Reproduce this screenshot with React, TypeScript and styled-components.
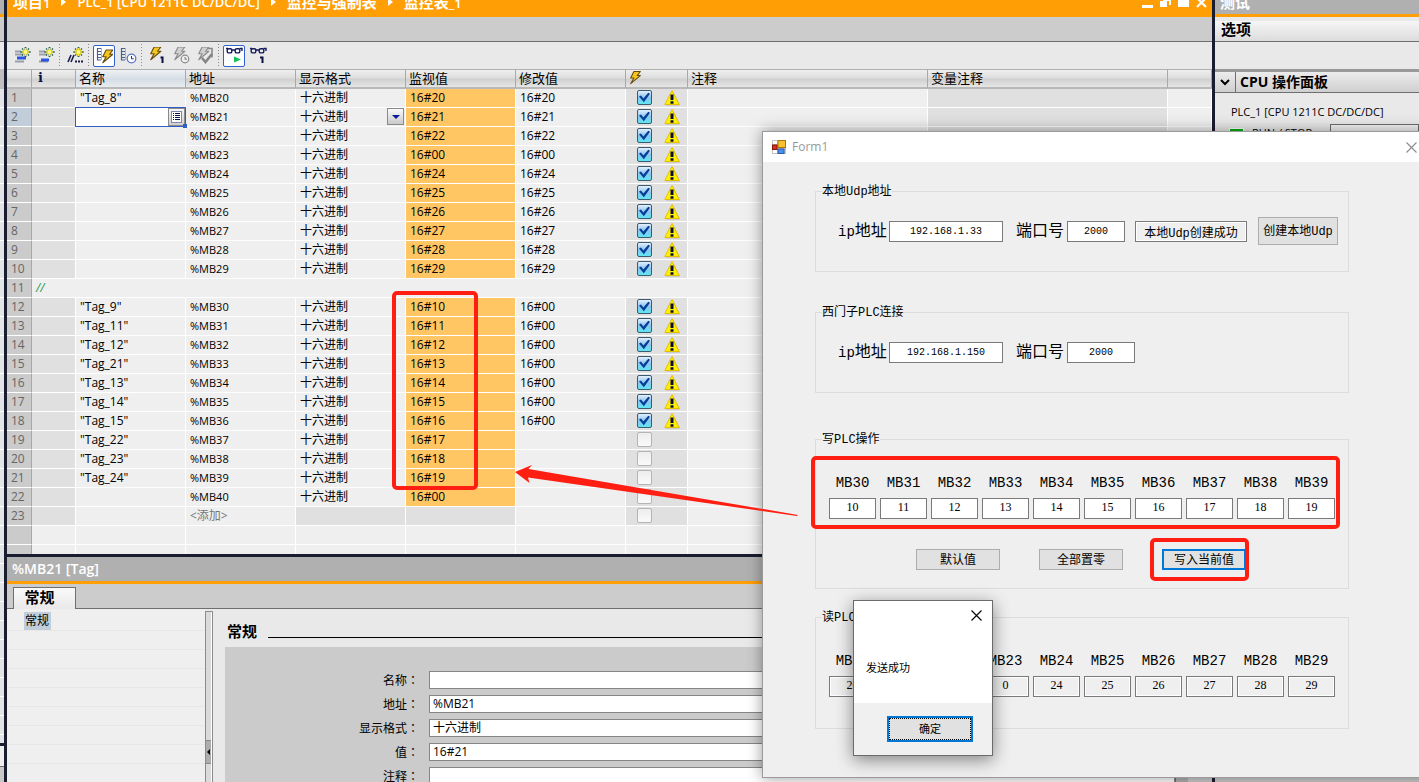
import React from "react";
import styled, { createGlobalStyle, css } from "styled-components";

const uiFont = `"Open Sans", "Noto Sans CJK SC", sans-serif`;
const formFont = `"Liberation Mono", "Noto Sans CJK SC", monospace`;
const orange = "#ff9e05";
const navy = "#1a1d2f";
const headGradient = "linear-gradient(#efefef 0%, #dedede 45%, #d0d0d0 55%, #e6e6e6 100%)";

const GlobalStyle = createGlobalStyle`
  *, *::before, *::after { box-sizing: border-box; }
  html, body { margin: 0; height: 100%; overflow: hidden; }
  #root { height: 100%; }
  button, input, select, textarea { font: inherit; color: inherit; margin: 0; padding: 0; border-radius: 0; outline: none; }
`;

/* ---------- shell ---------- */

const Desktop = styled.div`
  position: relative;
  display: flex;
  height: 100vh;
  overflow: hidden;
  background: #e9e9e9;
  font-family: ${uiFont};
  font-size: 12px;
  line-height: 18px;
  color: #000;
`;

const Divider = styled.div<{ $horizontal?: boolean }>`
  flex: none;
  background: ${navy};
  ${(p) => (p.$horizontal ? "height: 3px;" : "width: 3px;")}
`;

const Main = styled.main`
  flex: 1;
  min-width: 0;
  display: flex;
  flex-direction: column;
`;

const CaptionStrip = styled.div`
  flex: none;
  height: 17px;
  background: #b0b0b0;
  border-bottom: 3px solid ${orange};
`;

const GreyStrip = styled.div`
  flex: none;
  height: 25px;
  background: #cccccc;
  border-bottom: 1px solid #6f6f6f;
`;

/* ---------- collapsed project tree on the left edge ---------- */

const TreeEdge = styled.aside`
  flex: none;
  width: 4px;
  display: flex;
  flex-direction: column;
  background: #cccccc;
`;

const EdgeTools = styled.div`
  height: 27px;
  background: #e9e9e9;
`;

const EdgeHead = styled.div`
  height: 20px;
  background: #bfbfbf;
`;

const EdgeRows = styled.div`
  flex: 1;
  background: repeating-linear-gradient(#e2e4e8 0 18px, #ffffff 18px 19px);
`;

const EdgeFoot = styled.div`
  height: 39px;
  border-top: 3px solid ${navy};
  background: linear-gradient(#efefef 0 20px, #6f6f6f 20px 21px, #c8c8c8 21px);
`;

/* ---------- editor title ---------- */

const EditorTitle = styled.header`
  flex: none;
  display: flex;
  align-items: flex-end;
  height: 17px;
  padding: 0 5px 5px 6px;
  background: ${orange};
  color: #fff;
  overflow: hidden;
`;

const Crumbs = styled.nav`
  display: flex;
  align-items: center;
  gap: 11px;
  height: 20px;
  font-size: 13px;
  font-weight: 600;
  line-height: 20px;
  white-space: nowrap;
`;

const CrumbCjk = styled.span`
  font-size: 15px;
  font-weight: 700;
`;

const CrumbLatin = styled.span`
  font-size: 13px;
`;

const CrumbArrow = styled.span`
  width: 0;
  border-left: 5px solid #fff;
  border-top: 4px solid transparent;
  border-bottom: 4px solid transparent;
`;

const WindowControls = styled.div`
  display: flex;
  margin-left: auto;
  gap: 7px;
`;

const WindowControl = styled.button`
  width: 11px;
  height: 12px;
  border: 0;
  background: none;
  svg { display: block; }
`;

/* ---------- toolbar ---------- */

const Toolbar = styled.div`
  flex: none;
  display: flex;
  align-items: center;
  height: 27px;
  padding-left: 4px;
  background: #e9e9e9;
`;

const ToolButton = styled.button<{ $active?: boolean }>`
  display: flex;
  align-items: center;
  justify-content: center;
  width: 22px;
  height: 22px;
  margin-right: 2px;
  border: 1px solid ${(p) => (p.$active ? "#2f63d0" : "transparent")};
  border-radius: 2px;
  background: ${(p) => (p.$active ? "#fff" : "none")};
  svg { flex: none; }
`;

const ToolSeparator = styled.span`
  width: 1px;
  height: 23px;
  margin-right: 4px;
  background: repeating-linear-gradient(#8a8a8a 0 1px, transparent 1px 3px);
`;

/* ---------- watch table ---------- */

const TableArea = styled.section`
  flex: 1;
  min-height: 0;
  overflow: hidden;
  background: #efefef;
`;

const Table = styled.table`
  width: 100%;
  table-layout: fixed;
  border-collapse: separate;
  border-spacing: 0;
`;

const HeadCell = styled.th<{ $tint?: boolean }>`
  height: 20px;
  padding: 0 0 1px 3px;
  border-top: 1px solid #b0b0b0;
  border-right: 1px solid #a8a8a8;
  border-bottom: 2px solid #b8b8b8;
  background: ${(p) => (p.$tint ? "linear-gradient(#eef1f5, #d6dde6 55%, #e8ecf1)" : headGradient)};
  font-size: 13px;
  font-weight: 400;
  line-height: 16px;
  text-align: left;
  white-space: nowrap;
  svg { display: block; }
`;

const InfoMark = styled.b`
  display: block;
  padding-left: 3px;
  font-family: "DejaVu Serif", serif;
  font-size: 13px;
  line-height: 16px;
  color: #0b1045;
`;

type Tone = "plain" | "grey" | "amber" | "number" | "numberOn";
const tones: Record<Tone, string> = {
  plain: "#efefef",
  grey: "#e0e0e0",
  amber: "#ffc663",
  number: "#cbcbcb",
  numberOn: "#c1cdd8",
};

const Cell = styled.td<{ $tone?: Tone; $small?: boolean; $flush?: boolean }>`
  position: relative;
  height: 19px;
  padding: 0 0 0 ${(p) => (p.$flush ? 0 : 4)}px;
  border-right: 1px solid #fff;
  border-bottom: 1px solid #fff;
  background: ${(p) => tones[p.$tone ?? "plain"]};
  font-size: ${(p) => (p.$small ? 11 : 12)}px;
  line-height: 18px;
  white-space: nowrap;
  ${(p) =>
    (p.$tone === "number" || p.$tone === "numberOn") &&
    css`
      border-right-color: #a8a8a8;
      color: #666;
    `}
`;

const NameEditor = styled.div`
  position: absolute;
  z-index: 1;
  inset: -1px -1px -1px -1px;
  display: flex;
  border: 1px solid #2f5fc4;
  background: #fff;
  &::after {
    content: "";
    position: absolute;
    right: -2px;
    bottom: -2px;
    width: 4px;
    height: 4px;
    background: #2f5fc4;
  }
`;

const NameInput = styled.input`
  flex: 1;
  min-width: 0;
  border: 0;
  background: none;
`;

const PickButton = styled.button`
  display: flex;
  align-items: center;
  justify-content: center;
  width: 17px;
  border: 1px solid #8a8a8a;
  background: linear-gradient(#f6f6f6, #cfcfcf);
`;

const FormatSelect = styled.select`
  display: block;
  width: 100%;
  height: 18px;
  border: 0;
  appearance: none;
  background: none;
  font-size: 12px;
`;

const DropMark = styled.span`
  position: absolute;
  top: 0;
  right: 1px;
  width: 17px;
  height: 17px;
  display: flex;
  align-items: center;
  justify-content: center;
  border: 1px solid #8a8a8a;
  background: linear-gradient(#fafafa, #c9c9c9);
  pointer-events: none;
  &::after {
    content: "";
    border-top: 4px solid #0a1a9a;
    border-left: 4px solid transparent;
    border-right: 4px solid transparent;
  }
`;

const Flags = styled.div`
  display: flex;
  align-items: center;
  gap: 12px;
  height: 18px;
  padding-left: 11px;
`;

const TickBox = styled.input`
  appearance: none;
  position: relative;
  width: 15px;
  height: 15px;
  margin-bottom: 1px;
  border: 1px solid #b4b4b4;
  border-radius: 2px;
  background: linear-gradient(#ededed, #fafafa);
  &:checked {
    border-color: #3c5a70;
    background: linear-gradient(#e4effc 0%, #8cc4ee 50%, #5fe6f4 100%);
  }
  &:checked::before {
    content: "";
    position: absolute;
    inset: 1px;
    background: #063f97;
    clip-path: polygon(0 40%, 18% 32%, 40% 58%, 84% 6%, 100% 16%, 44% 94%);
  }
`;

const Comment = styled.i`
  color: #1b9a50;
`;

const AddHint = styled.span`
  color: #777;
`;

/* ---------- inspector below the table ---------- */

const Inspector = styled.section`
  flex: none;
  display: flex;
  flex-direction: column;
  height: 225px;
  overflow: hidden;
`;

const InspectorTitle = styled.h2`
  flex: none;
  height: 27px;
  margin: 0;
  padding-left: 5px;
  border-bottom: 3px solid ${orange};
  background: #b0b0b0;
  color: #fff;
  font-size: 14px;
  font-weight: 600;
  line-height: 24px;
`;

const TabBar = styled.div`
  flex: none;
  display: flex;
  align-items: flex-end;
  height: 25px;
  padding-left: 6px;
  border-bottom: 1px solid #6f6f6f;
  background: #cccccc;
`;

const Tab = styled.button`
  width: 63px;
  height: 22px;
  margin-bottom: -1px;
  padding: 0 10px 4px 0;
  border: 1px solid #6f6f6f;
  border-bottom: 0;
  background: linear-gradient(#fafafa, #e9e9e9);
  font-size: 15px;
  font-weight: 700;
  line-height: 16px;
`;

const InspectorBody = styled.div`
  flex: 1;
  min-height: 0;
  display: flex;
  background: #e9e9e9;
`;

const Outline = styled.div`
  flex: none;
  width: 198px;
  padding-top: 3px;
  background: #efefef;
`;

const OutlineRow = styled.div`
  height: 19px;
  padding-left: 17px;
  border-bottom: 1px solid #e7e7e7;
`;

const OutlineItem = styled.a`
  display: block;
  width: 27px;
  height: 18px;
  padding-left: 1px;
  background: #c1cdd8;
  color: inherit;
  line-height: 18px;
  text-decoration: none;
`;

const Splitter = styled.div`
  flex: none;
  display: flex;
  align-items: flex-start;
  width: 8px;
  margin-top: 2px;
  padding-top: 128px;
  border: 1px solid #8a8a8a;
  border-width: 1px 1px 0 1px;
  background: linear-gradient(90deg, #dadada 0 5px, #ffffff 5px);
`;

const Grip = styled.button`
  display: flex;
  align-items: center;
  justify-content: center;
  width: 5px;
  height: 24px;
  border: solid #8a8a8a;
  border-width: 1px 0;
  background: #adadad;
  &::after {
    content: "";
    border-right: 3px solid #000;
    border-top: 3px solid transparent;
    border-bottom: 3px solid transparent;
  }
`;

const Properties = styled.div`
  flex: 1;
  min-width: 0;
  padding: 12px 0 0 12px;
`;

const PropertiesHead = styled.div`
  display: flex;
  align-items: center;
  gap: 11px;
  height: 20px;
  padding-left: 2px;
  &::after {
    content: "";
    flex: 1;
    height: 1px;
    margin-top: 12px;
    background: #000;
  }
`;

const PropertiesHeading = styled.h3`
  margin: 0;
  font-size: 15px;
  line-height: 20px;
`;

const PropertiesBox = styled.div`
  display: grid;
  grid-template-columns: 194px 1fr;
  gap: 6px 10px;
  height: 160px;
  margin-top: 6px;
  padding-top: 24px;
  align-content: start;
  background: #cbcbcb;
`;

const PropertyLabel = styled.label`
  text-align: right;
  height: 18px;
  &::after {
    content: "：";
    font-family: "Noto Sans CJK TC", sans-serif;
  }
`;

const PropertyInput = styled.input`
  width: 100%;
  height: 18px;
  padding: 0 3px;
  border: 1px solid #868686;
  background: #fff;
`;

const ScrollTrack = styled.div`
  flex: none;
  width: 37px;
  border-left: 1px solid #6f6f6f;
  background: linear-gradient(90deg, #b0b0b0 0 12px, #cccccc 12px);
`;

/* ---------- test panel on the right ---------- */

const TestPanel = styled.aside`
  flex: none;
  width: 204px;
  display: flex;
  flex-direction: column;
  background: #e9e9e9;
`;

const TestCaption = styled.div`
  flex: none;
  display: flex;
  align-items: flex-end;
  height: 17px;
  padding: 0 0 2px 5px;
  border-bottom: 3px solid ${orange};
  background: #b0b0b0;
  color: #fff;
  font-size: 15px;
  font-weight: 700;
  line-height: 20px;
  overflow: hidden;
`;

const OptionsHead = styled.div`
  flex: none;
  height: 25px;
  padding: 2px 0 0 6px;
  border-bottom: 1px solid #6f6f6f;
  background: linear-gradient(#e9e9e9 0 4px, #f6f6f6 4px, #dcdcdc);
  font-size: 15px;
  font-weight: 700;
  line-height: 20px;
`;

const CpuHead = styled.div`
  flex: none;
  display: flex;
  align-items: center;
  height: 24px;
  margin-top: 27px;
  border-top: 3px solid #999;
  border-bottom: 1px solid #6f6f6f;
  background: linear-gradient(#ececec, #cfcfcf);
  font-size: 14px;
  font-weight: 700;
`;

const FoldButton = styled.button`
  display: flex;
  align-items: center;
  justify-content: center;
  width: 21px;
  height: 20px;
  margin-right: 4px;
  border: 0;
  border-right: 1px solid #6f6f6f;
  background: none;
`;

const CpuBody = styled.div`
  flex: 1;
  padding: 10px 0 0 14px;
`;

const CpuName = styled.div`
  padding-left: 2px;
  font-size: 11px;
`;

const LampRow = styled.div`
  display: flex;
  align-items: flex-start;
  margin-top: 3px;
`;

const Lamp = styled.span`
  width: 15px;
  height: 16px;
  margin: 4px 8px 0 0;
  border: 1px solid #fff;
  background: #05b20f;
`;

const LampText = styled.span`
  width: 78px;
  font-size: 11px;
`;

const LampField = styled.input`
  flex: 1;
  min-width: 0;
  height: 22px;
  border: 1px solid #6f6f6f;
  background: #f4f4f4;
`;

const TestFoot = styled.div`
  flex: none;
  height: 20px;
  background: #cccccc;
`;

/* ---------- Form1 window ---------- */

const FormWindow = styled.section`
  position: absolute;
  left: 762px;
  right: -17px;
  top: 131px;
  border: 1px solid #9a9a9a;
  background: #efefef;
  box-shadow: 0 0 14px rgba(0, 0, 0, 0.4);
  font-family: ${formFont};
`;

const FormTitle = styled.header`
  display: flex;
  align-items: center;
  height: 30px;
  padding-left: 9px;
  background: #fff;
  color: #999;
  font-family: ${uiFont};
  font-size: 12px;
`;

const FormName = styled.span`
  flex: 1;
  padding-left: 6px;
`;

const CloseButton = styled.button`
  display: flex;
  align-items: center;
  justify-content: center;
  width: 47px;
  height: 28px;
  border: 0;
  background: none;
`;

const FormBody = styled.div`
  padding: 22px 0 48px 52px;
`;

const Group = styled.fieldset<{ $gap?: number; $top: number; $bottom: number }>`
  max-width: 534px;
  margin: ${(p) => p.$gap ?? 0}px 0 0;
  padding: ${(p) => p.$top}px 0 ${(p) => p.$bottom}px 6px;
  border: 1px solid #dcdcdc;
`;

const GroupLegend = styled.legend`
  height: 14px;
  padding: 0;
  font-size: 12px;
  line-height: 16px;
`;

const AddressRow = styled.div`
  display: flex;
  align-items: center;
  height: 28px;
  padding-left: 16px;
`;

const FieldLabel = styled.label`
  width: 51px;
  padding-top: 2px;
  font-size: 16px;
  line-height: 20px;
  white-space: nowrap;
`;

const Latin = styled.span`
  font-size: 14px;
`;

const AddressInput = styled.input<{ $width: number; $gap?: number }>`
  width: ${(p) => p.$width}px;
  height: 21px;
  margin-right: ${(p) => p.$gap ?? 0}px;
  border: 1px solid #7a7a7a;
  background: #fff;
  font-size: 10px;
  text-align: center;
  &:read-only {
    padding-top: 2px;
    background: #efefef;
    box-shadow: inset 0 0 0 1px #fff;
    font-size: 12px;
  }
`;

const PushButton = styled.button<{ $width: number; $height: number; $focus?: boolean }>`
  width: ${(p) => p.$width}px;
  height: ${(p) => p.$height}px;
  padding-top: 2px;
  border: ${(p) => (p.$focus ? "2px solid #0078d7" : "1px solid #adadad")};
  background: #e1e1e1;
  font-size: 12px;
  line-height: 14px;
  white-space: nowrap;
`;

const Bytes = styled.div`
  display: flex;
  gap: 4px;
  padding-left: 7px;
`;

const ByteField = styled.label`
  display: flex;
  flex-direction: column;
  align-items: center;
  gap: 5px;
  width: 47px;
  padding-top: 1px;
  font-size: 14px;
  line-height: 20px;
`;

const ByteInput = styled.input`
  width: 100%;
  height: 21px;
  padding-bottom: 2px;
  border: 1px solid #7a7a7a;
  background: #fff;
  font-family: "Liberation Serif", serif;
  font-size: 12px;
  text-align: center;
  &:read-only {
    background: #efefef;
    box-shadow: inset 0 0 0 1px #fff;
  }
`;

const ButtonRow = styled.div`
  display: flex;
  gap: 39px;
  margin-top: 30px;
  padding-left: 94px;
`;

/* ---------- message box ---------- */

const MessageBox = styled.section`
  position: absolute;
  left: 853px;
  top: 600px;
  width: 140px;
  border: 1px solid #6b6b6b;
  background: #fff;
  box-shadow: 0 4px 16px rgba(0, 0, 0, 0.45);
  font-size: 11px;
`;

const MessageHead = styled.div`
  display: flex;
  justify-content: flex-end;
  svg { display: block; }
`;

const MessageClose = styled(CloseButton)`
  width: 31px;
`;

const MessageText = styled.p`
  margin: 0;
  padding: 30px 0 26px 12px;
  line-height: 18px;
`;

const MessageFoot = styled.div`
  display: flex;
  justify-content: flex-end;
  height: 52px;
  padding: 13px 19px 13px 0;
  background: #f0f0f0;
`;

const OkButton = styled.button`
  width: 86px;
  height: 26px;
  border: 2px solid #0078d7;
  background: #e1e1e1;
  outline: 1px dotted #000;
  outline-offset: -3px;
`;

const Marks = styled.svg`
  position: absolute;
  left: 0;
  top: 0;
  width: 100%;
  height: 100%;
  pointer-events: none;
`;

/* ---------- icons ---------- */

const Spark = () => (
  <g>
    <path d="M11.500 0v10M6.500 5h10" stroke="#1f5c58" strokeWidth="1.800" />
    <path d="M8 1.500l7 7M15 1.500l-7 7" stroke="#1f5c58" strokeWidth="1.200" />
    <path d="M11.500 1v8M7.500 5h8M9 2.500l5 5M14 2.500l-5 5" stroke="#ffe92e" strokeWidth="1.400" />
    <circle cx="11.500" cy="5" r="1.600" fill="#fff9a0" />
  </g>
);

const InsertRowIcon = ({ low }: { low?: boolean }) => (
  <svg width="17" height="17" viewBox="0 0 17 17" fill="none">
    <path d="M1 4.500h6M1 7.500h8M1 14.500h9" stroke="#9a9fa8" strokeWidth="2" />
    <path d={low ? "M3 13h8" : "M3 11h9"} stroke="#2a56e0" strokeWidth="3" />
    <Spark />
  </svg>
);

const CommentRowIcon = () => (
  <svg width="17" height="17" viewBox="0 0 17 17" fill="none">
    <path d="M1 15l3-7M4 15l3-7" stroke="#1a1d4a" strokeWidth="1.600" />
    <path d="M8 14.500h2M11 14.500h2M14 14.500h2" stroke="#1a1d4a" strokeWidth="2" />
    <Spark />
  </svg>
);

const boltPath = "M6 0h8L10 5h4L2 15l4-7H2z";

const Bolt = ({ grey }: { grey?: boolean }) => (
  <path d={boltPath} fill={grey ? "#d0d0d0" : "#f2c81c"} stroke={grey ? "#8a8a8a" : "#6a4a10"} strokeWidth="1.300" strokeLinejoin="round" />
);

const ListPart = () => (
  <g>
    <path d="M1.500 1v12M1 1.500h4M1 4.500h4M1 7.500h4M1 10.500h4M1 13h4" stroke="#4a5f8c" strokeWidth="1.200" />
    <path d="M5.500 1v12" stroke="#a5b3cc" />
  </g>
);

const ListBoltIcon = () => (
  <svg width="17" height="17" viewBox="0 0 17 17" fill="none">
    <ListPart />
    <g transform="translate(5 3) scale(.85)"><Bolt /></g>
  </svg>
);

const ListClockIcon = () => (
  <svg width="17" height="17" viewBox="0 0 17 17" fill="none">
    <ListPart />
    <circle cx="11.500" cy="11.500" r="4.300" fill="#fff" stroke="#5a76c8" strokeWidth="1.300" />
    <path d="M11.500 9v2.800h2.200" stroke="#1b2d80" />
  </svg>
);

const BoltOneIcon = () => (
  <svg width="17" height="17" viewBox="0 0 17 17" fill="none">
    <g transform="scale(.85)"><Bolt /></g>
    <path d="M11.500 10.500h2V16" stroke="#0b1045" strokeWidth="2" />
  </svg>
);

const BoltClockIcon = () => (
  <svg width="17" height="17" viewBox="0 0 17 17" fill="none">
    <g transform="scale(.85)"><Bolt grey /></g>
    <circle cx="12" cy="12" r="3.800" fill="#eee" stroke="#8a8a8a" strokeWidth="1.200" />
    <path d="M12 10v2.200h2" stroke="#777" />
  </svg>
);

const BoltCheckIcon = () => (
  <svg width="17" height="17" viewBox="0 0 17 17" fill="none">
    <path d="M10 1.500h5v9" stroke="#8a8a8a" strokeWidth="1.600" />
    <g transform="scale(.85)"><Bolt grey /></g>
    <path d="M5 11l3.500 4L15 7" stroke="#858585" strokeWidth="2.600" />
  </svg>
);

const Glasses = () => (
  <g stroke="#141a5c" strokeWidth="1.400">
    <rect x="1.200" y="1.700" width="4.600" height="4.200" rx="1.500" />
    <rect x="9.200" y="1.700" width="4.600" height="4.200" rx="1.500" />
    <path d="M5.800 3h3.400M0 1.500h2M13.500 1.500H16V4" />
  </g>
);

const GlassesPlayIcon = () => (
  <svg width="17" height="17" viewBox="0 0 17 17" fill="none">
    <Glasses />
    <path d="M8 9.500l7 3-7 3z" fill="#12c45a" />
  </svg>
);

const GlassesOneIcon = () => (
  <svg width="17" height="17" viewBox="0 0 17 17" fill="none">
    <Glasses />
    <path d="M10 10.500h2.500V16" stroke="#0b1045" strokeWidth="2" />
  </svg>
);

const WarningIcon = () => (
  <svg width="17" height="16" viewBox="0 0 17 16">
    <path d="M9 1.500l7 14H2z" fill="#b8b8b8" />
    <path d="M8 .5L15.200 14.500H.8z" fill="#fff200" stroke="#e6c000" />
    <path d="M6.500 4.500h3v5.500h-3zM6.500 11.300h3v2.400h-3z" fill="#0a0a3a" />
  </svg>
);

const ListPickIcon = () => (
  <svg width="11" height="12" viewBox="0 0 11 12" fill="none">
    <rect x=".5" y=".5" width="10" height="11" fill="#fff" stroke="#7c88ac" />
    <path d="M2 2.500h1M4 2.500h5M2 4.500h1M4 4.500h5M2 6.500h1M4 6.500h5M2 8.500h1M4 8.500h5" stroke="#0b1045" />
  </svg>
);

const AppIcon = () => (
  <svg width="14" height="14" viewBox="0 0 14 14">
    <rect width="14" height="14" fill="#c4c4c4" />
    <rect x="1" y="1" width="4" height="3" fill="#fff" />
    <rect x="1" y="10" width="4" height="3" fill="#fff" />
    <rect x="6" y=".5" width="7.500" height="7" fill="#f8c02c" stroke="#a87808" />
    <rect x=".5" y="5" width="4.500" height="4.500" fill="#d8301c" stroke="#8c1408" />
    <rect x="6" y="9" width="6" height="4.500" fill="#4a90f0" stroke="#2a5cb0" />
  </svg>
);

const CrossIcon = ({ color }: { color: string }) => (
  <svg width="11" height="11" viewBox="0 0 11 11" fill="none">
    <path d="M.5.5l10 10M10.500.5l-10 10" stroke={color} strokeWidth="1.100" />
  </svg>
);

/* ---------- data ---------- */

type WatchRow = { tag?: string; addr: string; value: string; modify?: string };

const rowsTop: WatchRow[] = ["20", "21", "22", "00", "24", "25", "26", "27", "28", "29"].map((v, i) => ({
  tag: i === 0 ? '"Tag_8"' : undefined,
  addr: `%MB${20 + i}`,
  value: `16#${v}`,
  modify: `16#${v}`,
}));

const rowsBottom: WatchRow[] = [9, 11, 12, 21, 13, 14, 15, 22, 23, 24].map((t, i) => ({
  tag: `"Tag_${t}"`,
  addr: `%MB${30 + i}`,
  value: `16#${10 + i}`,
  modify: i < 7 ? "16#00" : undefined,
}));
rowsBottom.push({ addr: "%MB40", value: "16#00" });

const columns = [25, 44, 110, 110, 110, 110, 110, 62, 240, 240];
const written = [10, 11, 12, 13, 14, 15, 16, 17, 18, 19];
const read = [20, 21, 22, 0, 24, 25, 26, 27, 28, 29];

const DataRow = ({ n, row }: { n: number; row: WatchRow }) => {
  const editing = n === 2;
  return (
    <tr>
      <Cell $tone={editing ? "numberOn" : "number"}>{n}</Cell>
      <Cell $tone="grey" />
      <Cell>
        {editing ? (
          <NameEditor>
            <NameInput aria-label="名称" />
            <PickButton aria-label="选择变量"><ListPickIcon /></PickButton>
          </NameEditor>
        ) : (
          row.tag
        )}
      </Cell>
      <Cell $small>{row.addr}</Cell>
      <Cell>
        {editing ? (
          <>
            <FormatSelect aria-label="显示格式"><option>十六进制</option></FormatSelect>
            <DropMark />
          </>
        ) : (
          "十六进制"
        )}
      </Cell>
      <Cell $tone="amber">{row.value}</Cell>
      <Cell>{row.modify}</Cell>
      <Cell $tone="grey" $flush>
        <Flags>
          <TickBox type="checkbox" defaultChecked={!!row.modify} aria-label={`修改 ${row.addr}`} />
          {row.modify && <WarningIcon />}
        </Flags>
      </Cell>
      <Cell />
      <Cell $tone="grey" />
      <Cell />
    </tr>
  );
};

const BlankRow = () => (
  <tr>
    <Cell $tone="number" />
    {Array.from({ length: 10 }, (_, i) => <Cell key={i} />)}
  </tr>
);

const WatchTable = () => (
  <Table>
    <colgroup>
      {columns.map((w, i) => <col key={i} width={w} />)}
      <col />
    </colgroup>
    <thead>
      <tr>
        <HeadCell />
        <HeadCell><InfoMark>i</InfoMark></HeadCell>
        <HeadCell $tint>名称</HeadCell>
        <HeadCell>地址</HeadCell>
        <HeadCell>显示格式</HeadCell>
        <HeadCell>监视值</HeadCell>
        <HeadCell>修改值</HeadCell>
        <HeadCell aria-label="修改">
          <svg width="13" height="14" viewBox="0 0 16 16"><Bolt /></svg>
        </HeadCell>
        <HeadCell>注释</HeadCell>
        <HeadCell>变量注释</HeadCell>
        <HeadCell />
      </tr>
    </thead>
    <tbody>
      {rowsTop.map((r, i) => <DataRow key={r.addr} n={i + 1} row={r} />)}
      <tr>
        <Cell $tone="number">11</Cell>
        <Cell colSpan={10}><Comment>//</Comment></Cell>
      </tr>
      {rowsBottom.map((r, i) => <DataRow key={r.addr} n={i + 12} row={r} />)}
      <tr>
        <Cell $tone="number">23</Cell>
        <Cell $tone="grey" />
        <Cell />
        <Cell><AddHint>&lt;添加&gt;</AddHint></Cell>
        <Cell $tone="grey" />
        <Cell $tone="grey" />
        <Cell />
        <Cell $tone="grey" $flush>
          <Flags><TickBox type="checkbox" aria-label="修改" /></Flags>
        </Cell>
        <Cell />
        <Cell $tone="grey" />
        <Cell />
      </tr>
      <BlankRow />
      <BlankRow />
    </tbody>
  </Table>
);

const properties = [
  { id: "p-name", label: "名称", value: "" },
  { id: "p-addr", label: "地址", value: "%MB21" },
  { id: "p-format", label: "显示格式", value: "十六进制" },
  { id: "p-value", label: "值", value: "16#21" },
  { id: "p-note", label: "注释", value: "" },
];

const ByteGroup = ({ start, values, readOnly }: { start: number; values: number[]; readOnly?: boolean }) => (
  <Bytes>
    {values.map((v, i) => (
      <ByteField key={i}>
        MB{start + i}
        <ByteInput defaultValue={v} readOnly={readOnly} />
      </ByteField>
    ))}
  </Bytes>
);

export default function App() {
  return (
    <Desktop>
      <GlobalStyle />
      <TreeEdge>
        <CaptionStrip />
        <GreyStrip />
        <EdgeTools />
        <EdgeHead />
        <EdgeRows />
        <EdgeFoot />
      </TreeEdge>
      <Divider />
      <Main>
        <EditorTitle>
          <Crumbs>
            <span><CrumbCjk>项目</CrumbCjk>1</span>
            <CrumbArrow />
            <CrumbLatin>PLC_1 [CPU 1211C DC/DC/DC]</CrumbLatin>
            <CrumbArrow />
            <CrumbCjk>监控与强制表</CrumbCjk>
            <CrumbArrow />
            <span><CrumbCjk>监控表</CrumbCjk>_1</span>
          </Crumbs>
          <WindowControls>
            <WindowControl aria-label="最小化"><svg width="11" height="10"><path d="M0 4h11v3H0z" fill="#fff" /></svg></WindowControl>
            <WindowControl aria-label="还原"><svg width="12" height="12"><path d="M0 1h7v6H0zM3 0h8v5H9V1H3z" fill="#fff" /></svg></WindowControl>
            <WindowControl aria-label="最大化"><svg width="11" height="12"><path d="M0 0h11v7H0z" fill="#fff" /></svg></WindowControl>
            <WindowControl aria-label="关闭"><svg width="11" height="12"><path d="M1-2l9 9M10-2L1 7" stroke="#fff" strokeWidth="2.200" /></svg></WindowControl>
          </WindowControls>
        </EditorTitle>
        <GreyStrip />
        <Toolbar>
          <ToolButton aria-label="插入行"><InsertRowIcon /></ToolButton>
          <ToolButton aria-label="添加行"><InsertRowIcon low /></ToolButton>
          <ToolSeparator />
          <ToolButton aria-label="插入注释行"><CommentRowIcon /></ToolButton>
          <ToolSeparator />
          <ToolButton $active aria-label="显示修改列"><ListBoltIcon /></ToolButton>
          <ToolButton aria-label="显示扩展列"><ListClockIcon /></ToolButton>
          <ToolSeparator />
          <ToolButton aria-label="立即修改一次"><BoltOneIcon /></ToolButton>
          <ToolButton aria-label="触发修改"><BoltClockIcon /></ToolButton>
          <ToolButton aria-label="启用外围输出"><BoltCheckIcon /></ToolButton>
          <ToolSeparator />
          <ToolButton $active aria-label="全部监视"><GlassesPlayIcon /></ToolButton>
          <ToolButton aria-label="监视一次"><GlassesOneIcon /></ToolButton>
        </Toolbar>
        <TableArea>
          <WatchTable />
        </TableArea>
        <Divider $horizontal />
        <Inspector>
          <InspectorTitle>%MB21 [Tag]</InspectorTitle>
          <TabBar><Tab>常规</Tab></TabBar>
          <InspectorBody>
            <Outline>
              <OutlineRow><OutlineItem href="#general">常规</OutlineItem></OutlineRow>
              {Array.from({ length: 8 }, (_, i) => <OutlineRow key={i} />)}
            </Outline>
            <Splitter><Grip aria-label="折叠" /></Splitter>
            <Properties id="general">
              <PropertiesHead><PropertiesHeading>常规</PropertiesHeading></PropertiesHead>
              <PropertiesBox>
                {properties.map((p) => (
                  <React.Fragment key={p.id}>
                    <PropertyLabel htmlFor={p.id}>{p.label}</PropertyLabel>
                    <PropertyInput id={p.id} defaultValue={p.value} />
                  </React.Fragment>
                ))}
              </PropertiesBox>
            </Properties>
            <ScrollTrack />
          </InspectorBody>
        </Inspector>
      </Main>
      <Divider />
      <TestPanel>
        <TestCaption>测试</TestCaption>
        <OptionsHead>选项</OptionsHead>
        <CpuHead>
          <FoldButton aria-label="折叠">
            <svg width="10" height="7" fill="none"><path d="M1 1l4 4 4-4" stroke="#000" strokeWidth="2" /></svg>
          </FoldButton>
          CPU 操作面板
        </CpuHead>
        <CpuBody>
          <CpuName>PLC_1 [CPU 1211C DC/DC/DC]</CpuName>
          <LampRow>
            <Lamp />
            <LampText>RUN / STOP</LampText>
            <LampField aria-label="RUN / STOP" />
          </LampRow>
        </CpuBody>
        <TestFoot />
      </TestPanel>

      <FormWindow>
        <FormTitle>
          <AppIcon />
          <FormName>Form1</FormName>
          <CloseButton aria-label="关闭"><CrossIcon color="#8c8c8c" /></CloseButton>
        </FormTitle>
        <FormBody>
          <Group $top={19} $bottom={26}>
            <GroupLegend>本地Udp地址</GroupLegend>
            <AddressRow>
              <FieldLabel htmlFor="local-ip"><Latin>ip</Latin>地址</FieldLabel>
              <AddressInput id="local-ip" $width={114} $gap={13} defaultValue="192.168.1.33" />
              <FieldLabel htmlFor="local-port">端口号</FieldLabel>
              <AddressInput id="local-port" $width={58} $gap={10} defaultValue="2000" />
              <AddressInput aria-label="状态" $width={112} $gap={11} readOnly value="本地Udp创建成功" />
              <PushButton $width={80} $height={28}>创建本地Udp</PushButton>
            </AddressRow>
          </Group>
          <Group $gap={33} $top={19} $bottom={26}>
            <GroupLegend>西门子PLC连接</GroupLegend>
            <AddressRow>
              <FieldLabel htmlFor="plc-ip"><Latin>ip</Latin>地址</FieldLabel>
              <AddressInput id="plc-ip" $width={114} $gap={13} defaultValue="192.168.1.150" />
              <FieldLabel htmlFor="plc-port">端口号</FieldLabel>
              <AddressInput id="plc-port" $width={68} defaultValue="2000" />
            </AddressRow>
          </Group>
          <Group $gap={39} $top={26} $bottom={18}>
            <GroupLegend>写PLC操作</GroupLegend>
            <ByteGroup start={30} values={written} />
            <ButtonRow>
              <PushButton $width={84} $height={21}>默认值</PushButton>
              <PushButton $width={84} $height={21}>全部置零</PushButton>
              <PushButton $width={84} $height={21} $focus>写入当前值</PushButton>
            </ButtonRow>
          </Group>
          <Group $gap={21} $top={26} $bottom={31}>
            <GroupLegend>读PLC操作</GroupLegend>
            <ByteGroup start={20} values={read} readOnly />
          </Group>
        </FormBody>
      </FormWindow>

      <MessageBox role="dialog" aria-label="发送成功">
        <MessageHead>
          <MessageClose aria-label="关闭"><CrossIcon color="#000" /></MessageClose>
        </MessageHead>
        <MessageText>发送成功</MessageText>
        <MessageFoot><OkButton>确定</OkButton></MessageFoot>
      </MessageBox>

      <Marks fill="none" stroke="#ff1e12" strokeWidth="4" aria-hidden="true">
        <rect x="394" y="293" width="82" height="195" rx="3" />
        <rect x="813" y="458" width="525" height="69" rx="3" />
        <rect x="1152" y="540" width="95" height="39" rx="3" />
        <path d="M515 472l17-7-3.500 4L798 515l-1 1-269-38.500 1.500 5.500z" fill="#ff1e12" stroke="none" />
      </Marks>
    </Desktop>
  );
}
